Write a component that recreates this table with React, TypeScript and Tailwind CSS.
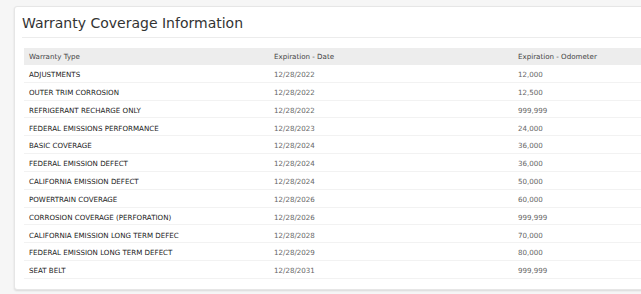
import React from 'react';

const rows: [string, string, string][] = [
  ['ADJUSTMENTS', '12/28/2022', '12,000'],
  ['OUTER TRIM CORROSION', '12/28/2022', '12,500'],
  ['REFRIGERANT RECHARGE ONLY', '12/28/2022', '999,999'],
  ['FEDERAL EMISSIONS PERFORMANCE', '12/28/2023', '24,000'],
  ['BASIC COVERAGE', '12/28/2024', '36,000'],
  ['FEDERAL EMISSION DEFECT', '12/28/2024', '36,000'],
  ['CALIFORNIA EMISSION DEFECT', '12/28/2024', '50,000'],
  ['POWERTRAIN COVERAGE', '12/28/2026', '60,000'],
  ['CORROSION COVERAGE (PERFORATION)', '12/28/2026', '999,999'],
  ['CALIFORNIA EMISSION LONG TERM DEFEC', '12/28/2028', '70,000'],
  ['FEDERAL EMISSION LONG TERM DEFECT', '12/28/2029', '80,000'],
  ['SEAT BELT', '12/28/2031', '999,999'],
];

export default function App() {
  return (
    <div
      className="w-[641px] h-[294px] overflow-hidden bg-[#f6f6f6] pt-[6px] pl-[14px]"
      style={{ fontFamily: '"DejaVu Sans", sans-serif' }}
    >
      <div className="w-[700px] h-[284px] bg-white border border-[#e6e6e6] rounded-[3px] shadow-[0_1px_2px_rgba(0,0,0,0.12)] pl-[7px]">
        <div className="h-[31px] border-b border-[#ececec] flex items-center text-[14px] text-[#333] pt-[3px]">
          Warranty Coverage Information
        </div>
        <div className="mt-[10px] ml-[2px]">
          <div className="h-[17px] bg-[#ededed] flex items-center text-[7.1px] text-[#444] pt-[2px]">
            <div className="w-[245px] pl-[5px]">Warranty Type</div>
            <div className="w-[244px] pl-[5px]">Expiration - Date</div>
            <div className="pl-[5px]">Expiration - Odometer</div>
          </div>
          {rows.map(([type, date, odo]) => (
            <div key={type} className="h-[17.83px] border-b border-[#f2f2f2] flex items-center text-[7.1px] pt-[4px]">
              <div className="w-[245px] pl-[5px] text-[#222]">{type}</div>
              <div className="w-[244px] pl-[5px] text-[#666]">{date}</div>
              <div className="pl-[5px] text-[#666]">{odo}</div>
            </div>
          ))}
        </div>
      </div>
    </div>
  );
}
